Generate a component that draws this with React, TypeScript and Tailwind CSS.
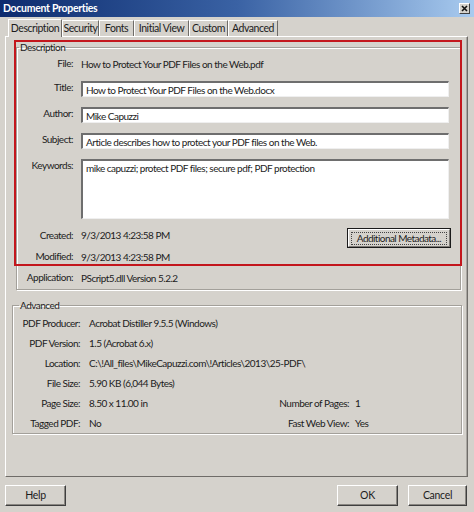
import React from "react";

const font = { fontFamily: "Lato, 'Noto Sans', sans-serif" };

function Tab({ label, active, w }: { label: string; active?: boolean; w: number }) {
  if (active) {
    return (
      <div
        className="relative z-10 flex h-[18px] items-center justify-center border-l border-t border-r border-l-white border-t-white border-r-[#6f6c68] bg-[#d5d2cc] text-[10.5px] tracking-[-0.45px] text-[#1c1c1c] -mb-px"
        style={{ width: w }}
      >
        {label}
      </div>
    );
  }
  return (
    <div
      className="flex h-[16px] items-center justify-center border-l border-t border-r border-l-white border-t-white border-r-[#6f6c68] text-[10.5px] tracking-[-0.45px] text-[#1c1c1c]"
      style={{ width: w }}
    >
      {label}
    </div>
  );
}

function Field({ value, h = 16 }: { value: string; h?: number }) {
  return (
    <div
      className="w-[368px] border-l-2 border-t-2 border-r border-b border-l-[#6e6e6e] border-t-[#6e6e6e] border-r-[#efefef] border-b-[#efefef] bg-white px-[3px] text-[10px] leading-[12px] text-[#1c1c1c] flex items-start pt-px"
      style={{ height: h }}
    >
      {value}
    </div>
  );
}

function Btn({ label, w }: { label: string; w: number }) {
  return (
    <div
      className="flex h-[21px] items-center justify-center border border-l-white border-t-white border-r-[#3f3f3f] border-b-[#3f3f3f] bg-[#d5d2cc] text-[10.5px] tracking-[-0.3px] text-[#1c1c1c] shadow-[inset_-1px_-1px_0_#8a8782]"
      style={{ width: w }}
    >
      {label}
    </div>
  );
}

function DescRow({ label, children, className = "" }: { label: string; children: React.ReactNode; className?: string }) {
  return (
    <div className={`flex items-start ${className}`}>
      <div className="w-[56px] shrink-0 text-right leading-[12px]">{label}</div>
      <div className="ml-[8px]">{children}</div>
    </div>
  );
}

function AdvRow({ label, value, label2, value2 }: { label: string; value: string; label2?: string; value2?: string }) {
  return (
    <div className="flex h-[12px] items-center leading-[12px]">
      <div className="w-[67px] shrink-0 text-right">{label}</div>
      <div className="ml-[9px] w-[176px] shrink-0 whitespace-nowrap">{value}</div>
      {label2 && <div className="w-[84px] shrink-0 text-right">{label2}</div>}
      {value2 && <div className="ml-[6px]">{value2}</div>}
    </div>
  );
}

export default function App() {
  return (
    <div
      className="relative flex h-[512px] w-[474px] flex-col overflow-hidden bg-[#d5d2cc] text-[10px] tracking-[-0.5px] text-[#1c1c1c]"
      style={font}
    >
      {/* title bar */}
      <div className="flex h-[17px] shrink-0 items-center justify-between bg-gradient-to-r from-[#0d2b6e] via-[#3a62a4] to-[#a9cbef] pl-[3px] pr-[4px]">
        <span className="text-[10.5px] font-bold tracking-[-0.3px] text-white">Document Properties</span>
        <div className="flex h-[11px] w-[11px] items-center justify-center border border-l-white border-t-white border-r-[#404040] border-b-[#404040] bg-[#d5d2cc]">
          <svg width="7" height="7" viewBox="0 0 7 7">
            <path d="M1 1 L6 6 M6 1 L1 6" stroke="#111" strokeWidth="1.6" />
          </svg>
        </div>
      </div>

      {/* tabs */}
      <div className="flex h-[19px] shrink-0 items-end pl-[8px]">
        <Tab label="Description" active w={54} />
        <Tab label="Security" w={37} />
        <Tab label="Fonts" w={35} />
        <Tab label="Initial View" w={55} />
        <Tab label="Custom" w={39} />
        <Tab label="Advanced" w={50} />
      </div>

      {/* tab page */}
      <div className="ml-[5px] mr-[6px] flex h-[441px] shrink-0 flex-col border border-l-white border-t-white border-r-[#6f6c68] border-b-[#6f6c68] shadow-[inset_-1px_0_0_#a9a6a1]">
        <fieldset className="ml-[10px] mr-[6px] mt-[4px] border border-[#a3a09a] pb-[3px] shadow-[inset_1px_1px_0_#fff,1px_1px_0_#fff]">
          <legend className="ml-[2px] px-[1px] leading-[12px]">Description</legend>
          <div className="flex flex-col">
            <DescRow label="File:" className="mt-[4px]">
              <span className="leading-[12px]">How to Protect Your PDF Files on the Web.pdf</span>
            </DescRow>
            <DescRow label="Title:" className="mt-[9px] items-center">
              <Field value="How to Protect Your PDF Files on the Web.docx" />
            </DescRow>
            <DescRow label="Author:" className="mt-[10px] items-center">
              <Field value="Mike Capuzzi" />
            </DescRow>
            <DescRow label="Subject:" className="mt-[10px] items-center">
              <Field value="Article describes how to protect your PDF files on the Web." />
            </DescRow>
            <DescRow label="Keywords:" className="mt-[10px]">
              <Field value="mike capuzzi; protect PDF files; secure pdf; PDF protection" h={60} />
            </DescRow>
            <div className="mt-[9px] flex h-[20px] items-start">
              <div className="w-[56px] shrink-0 text-right leading-[12px] mt-[1px]">Created:</div>
              <div className="ml-[8px] leading-[12px] mt-[1px]">9/3/2013 4:23:58 PM</div>
              <div className="ml-auto mr-[9px] flex h-[20px] w-[104px] items-center justify-center border border-[#1a1a1a] bg-[#d5d2cc]">
                <div className="flex h-full w-full items-center justify-center border border-l-white border-t-white border-r-[#7c7975] border-b-[#7c7975]">
                  <div className="flex h-[13px] w-[96px] items-center justify-center border border-dotted border-[#444] text-[10px] tracking-[-0.55px]">
                    Additional Metadata...
                  </div>
                </div>
              </div>
            </div>
            <DescRow label="Modified:" className="mt-[2px]">
              <span className="leading-[12px]">9/3/2013 4:23:58 PM</span>
            </DescRow>
            <DescRow label="Application:" className="mt-[6px]">
              <span className="leading-[12px]">PScript5.dll Version 5.2.2</span>
            </DescRow>
          </div>
        </fieldset>

        <fieldset className="ml-[6px] mr-[5px] mt-[9px] border border-[#a3a09a] pb-[4px] shadow-[inset_1px_1px_0_#fff,1px_1px_0_#fff]">
          <legend className="ml-[6px] px-[1px] leading-[12px]">Advanced</legend>
          <div className="mt-[6px] flex flex-col gap-[8px]">
            <AdvRow label="PDF Producer:" value="Acrobat Distiller 9.5.5 (Windows)" />
            <AdvRow label="PDF Version:" value="1.5 (Acrobat 6.x)" />
            <AdvRow label="Location:" value="C:\!All_files\MikeCapuzzi.com\!Articles\2013\25-PDF\" />
            <AdvRow label="File Size:" value="5.90 KB (6,044 Bytes)" />
            <AdvRow label="Page Size:" value="8.50 x 11.00 in" label2="Number of Pages:" value2="1" />
            <AdvRow label="Tagged PDF:" value="No" label2="Fast Web View:" value2="Yes" />
          </div>
        </fieldset>
      </div>

      {/* buttons */}
      <div className="mt-[8px] flex items-start pl-[5px] pr-[7px]">
        <Btn label="Help" w={61} />
        <div className="ml-auto flex gap-[10px]">
          <Btn label="OK" w={61} />
          <Btn label="Cancel" w={59} />
        </div>
      </div>

      {/* red highlight frame */}
      <div className="pointer-events-none absolute left-[14px] top-[40px] h-[226px] w-[448px] border-2 border-[#c3161c]" />
    </div>
  );
}
